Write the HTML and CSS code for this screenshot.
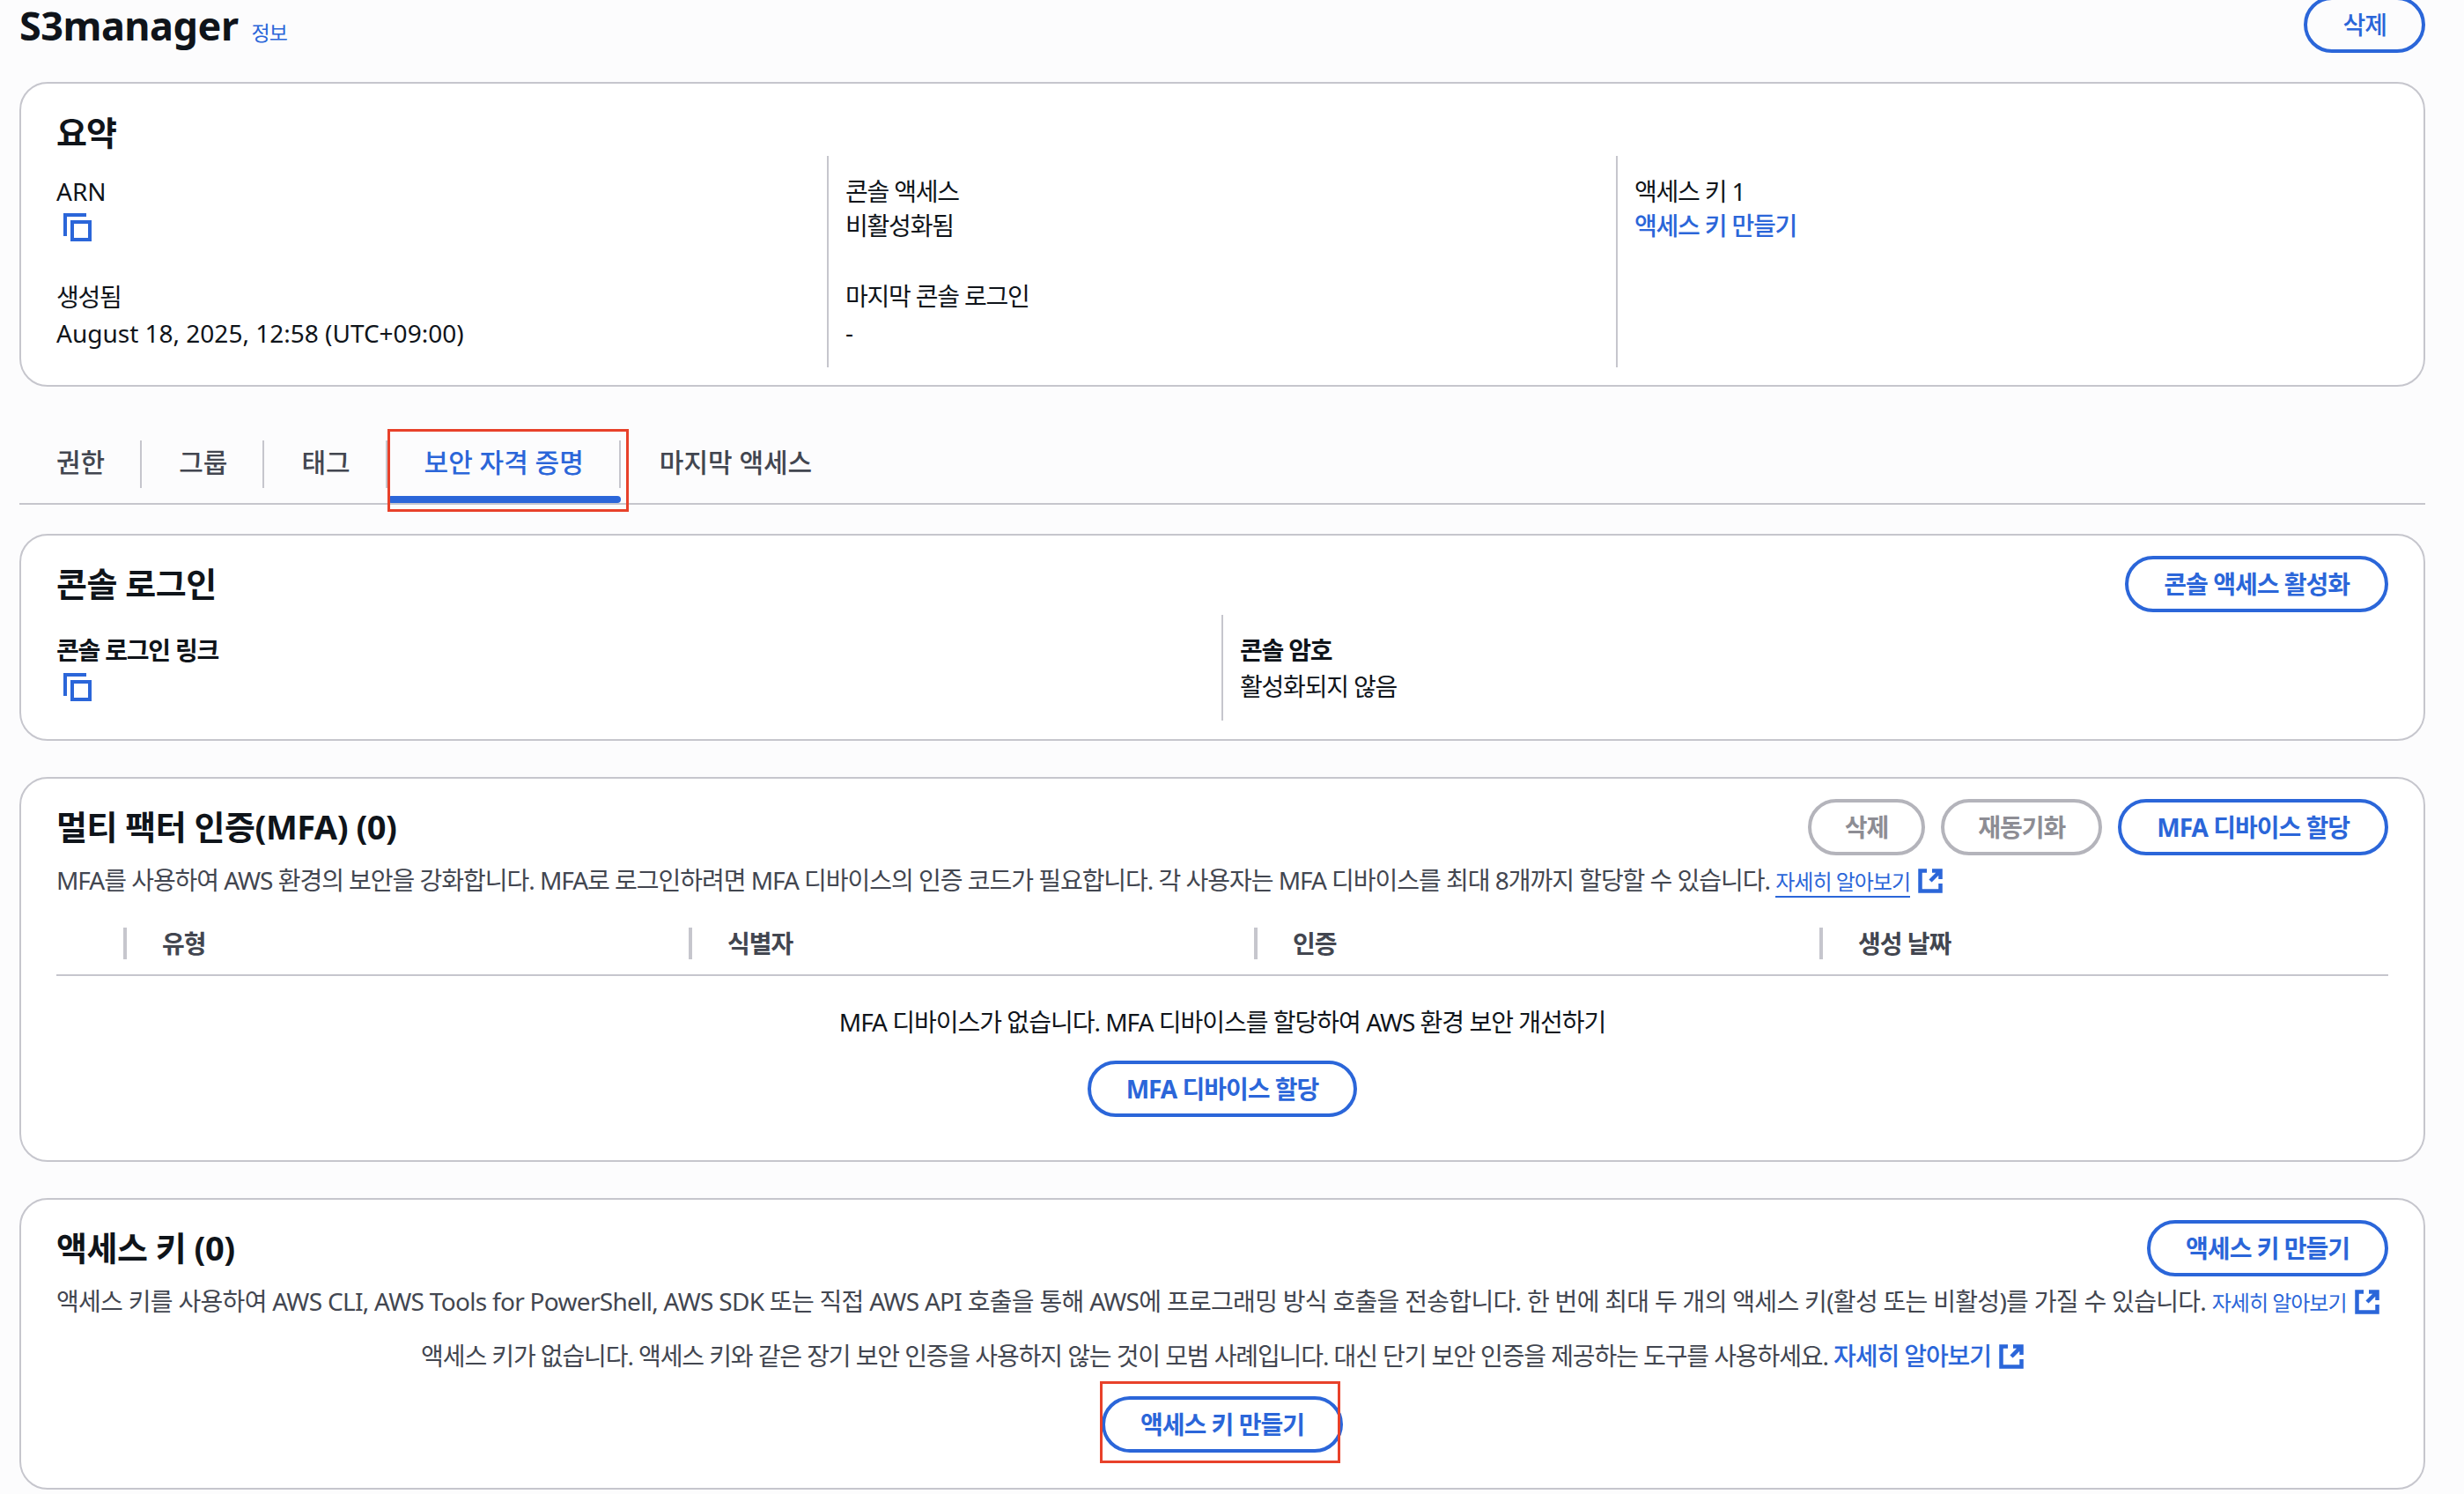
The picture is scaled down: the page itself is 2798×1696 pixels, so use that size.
FILE: index.html
```html
<!DOCTYPE html>
<html lang="ko">
<head>
<meta charset="utf-8">
<title>S3manager</title>
<link rel="stylesheet" href="styles.css">
</head>
<body>
<svg class="defs" width="0" height="0" aria-hidden="true">
  <symbol id="copy" viewBox="0 0 32 32"><path d="M26 2H2v24M10 10h20v20H10z" fill="none" stroke="currentColor" stroke-width="4"/></symbol>
  <symbol id="ext" viewBox="0 0 28 28"><path d="M10 2.500H2.500v23h23V17M16 2.500h9.500V12M25 3 14 14" fill="none" stroke="currentColor" stroke-width="4.500"/></symbol>
</svg>
<header class="page-head">
  <div class="title-wrap"><h1>S3manager</h1><a class="info">정보</a></div>
  <button class="btn">삭제</button>
</header>

<section class="card summary">
  <h2 class="h-sm">요약</h2>
  <div class="cols3">
    <div class="col">
      <div class="lbl latin">ARN</div>
      <svg class="copy"><use href="#copy"/></svg>
      <div class="lbl second">생성됨</div>
      <div class="val latin">August 18, 2025, 12:58 (UTC+09:00)</div>
    </div>
    <div class="col sep">
      <div class="lbl">콘솔 액세스</div>
      <div class="val">비활성화됨</div>
      <div class="lbl second alt">마지막 콘솔 로그인</div>
      <div class="val">-</div>
    </div>
    <div class="col sep">
      <div class="lbl">액세스 키 1</div>
      <a class="val link-b">액세스 키 만들기</a>
    </div>
  </div>
</section>

<nav class="tabs">
  <a class="tab">권한</a>
  <a class="tab">그룹</a>
  <a class="tab">태그</a>
  <a class="tab active">보안 자격 증명</a>
  <a class="tab last">마지막 액세스</a>
</nav>

<section class="card console">
  <div class="card-head">
    <h2>콘솔 로그인</h2>
    <button class="btn">콘솔 액세스 활성화</button>
  </div>
  <div class="cols2">
    <div class="col">
      <div class="lbl strong">콘솔 로그인 링크</div>
      <svg class="copy"><use href="#copy"/></svg>
    </div>
    <div class="col sep">
      <div class="lbl strong">콘솔 암호</div>
      <div class="val">활성화되지 않음</div>
    </div>
  </div>
</section>

<section class="card mfa">
  <div class="card-head">
    <h2>멀티 팩터 인증(MFA) (0)</h2>
    <div class="btns">
      <button class="btn off">삭제</button>
      <button class="btn off">재동기화</button>
      <button class="btn">MFA 디바이스 할당</button>
    </div>
  </div>
  <p class="desc">MFA를 사용하여 AWS 환경의 보안을 강화합니다. MFA로 로그인하려면 MFA 디바이스의 인증 코드가 필요합니다. 각 사용자는 MFA 디바이스를 최대 8개까지 할당할 수 있습니다. <a class="more under">자세히 알아보기</a><svg class="ext"><use href="#ext"/></svg></p>
  <div class="thead">
    <div class="th">유형</div>
    <div class="th">식별자</div>
    <div class="th">인증</div>
    <div class="th">생성 날짜</div>
  </div>
  <div class="empty">
    <p>MFA 디바이스가 없습니다. MFA 디바이스를 할당하여 AWS 환경 보안 개선하기</p>
    <button class="btn">MFA 디바이스 할당</button>
  </div>
</section>

<section class="card keys">
  <div class="card-head">
    <h2>액세스 키 (0)</h2>
    <button class="btn">액세스 키 만들기</button>
  </div>
  <p class="desc">액세스 키를 사용하여 AWS CLI, AWS Tools for PowerShell, AWS SDK 또는 직접 AWS API 호출을 통해 AWS에 프로그래밍 방식 호출을 전송합니다. 한 번에 최대 두 개의 액세스 키(활성 또는 비활성)를 가질 수 있습니다. <a class="more">자세히 알아보기</a><svg class="ext"><use href="#ext"/></svg></p>
  <div class="empty keys-empty">
    <p>액세스 키가 없습니다. 액세스 키와 같은 장기 보안 인증을 사용하지 않는 것이 모범 사례입니다. 대신 단기 보안 인증을 제공하는 도구를 사용하세요. <a class="link-b">자세히 알아보기</a><svg class="ext"><use href="#ext"/></svg></p>
    <button class="btn">액세스 키 만들기</button>
  </div>
</section>

<div class="mark tab-mark"></div>
<div class="mark btn-mark"></div>
</body>
</html>
```
FILE: styles.css
```css
* { box-sizing: border-box; }
html, body { margin: 0; height: 1696px; overflow: hidden; }
body {
  position: relative;
  padding: 0 44px 0 22px;
  background: #fcfcfd;
  color: #0f141a;
  font-family: "Noto Sans", "Noto Sans CJK KR", sans-serif;
  font-size: 28px;
  line-height: 40px;
  letter-spacing: -1px;
}
.defs { position: absolute; }
h1, h2, p { margin: 0; }
a { color: #2b66d9; }

.page-head { display: flex; justify-content: space-between; height: 93px; }
.title-wrap { display: flex; align-items: baseline; gap: 15px; height: 58px; }
h1 { font-size: 45px; font-weight: 700; line-height: 58px; letter-spacing: -.5px; }
.info { font-size: 23px; }

.btn {
  height: 64px;
  padding: 0 40px;
  border: 4px solid #2b66d9;
  border-radius: 32px;
  background: #fff;
  color: #2b66d9;
  font: 700 28px/1 "Noto Sans", "Noto Sans CJK KR", sans-serif;
  letter-spacing: -1px;
  white-space: nowrap;
}
.btn.off { padding: 0 38px; border-color: #b4b4bb; color: #8d8d94; }
.page-head .btn { margin-top: -4px; background: transparent; font-weight: 500; }

.card {
  width: 2732px;
  padding: 0 40px;
  border: 2px solid #c6c6cd;
  border-radius: 32px;
  background: #fff;
}
.summary { height: 346px; padding-top: 30px; }
.h-sm { font-size: 38px; font-weight: 700; line-height: 50px; }
.cols3 { display: grid; grid-template-columns: 875px 896px 1fr; height: 240px; margin-top: 2px; }
.cols3 .col > .lbl:first-child { padding-top: 19px; }
.cols3 .lbl:first-child + .val { margin-top: -2px; }
.cols2 { display: grid; grid-template-columns: 1323px 1fr; height: 120px; }
.col { letter-spacing: -1.2px; }
.sep { border-left: 2px solid #c6c6cd; padding-left: 19px; }
.lbl { line-height: 42px; padding-top: 4px; }
.val { line-height: 40px; display: block; }
.second { padding-top: 27px; }
.cols3 .alt { padding-top: 39px; }
.copy { display: block; width: 32px; height: 32px; margin: 4px 0 0 8px; color: #2b66d9; }
.link-b { color: #2b66d9; font-weight: 500; }
.summary .col:first-child .second { padding-top: 42px; }
.col .latin { letter-spacing: 0; }

.tabs { display: flex; width: 2732px; height: 134px; padding: 51px 0 0; margin-bottom: 33px; border-bottom: 2px solid #c6c6cd; align-items: stretch; }
.tab {
  position: relative;
  height: 81px;
  padding: 15px 42px 0;
  font-size: 30px;
  font-weight: 500;
  letter-spacing: 0;
  color: #424650;
}
.tab::after { content: ""; position: absolute; right: 0; top: 10px; height: 54px; border-right: 2px solid #c6c6cd; }
.tab.last::after { display: none; }
.tab.last { padding-left: 44px; }
.tab.active { color: #2b66d9; }
.tab.active::before { content: ""; position: absolute; left: 0; right: 0; bottom: 0; height: 8px; border-radius: 4px; background: #2b66d9; }

.card-head { display: flex; justify-content: space-between; align-items: center; padding-top: 23px; }
.card-head h2 { font-size: 38px; font-weight: 700; line-height: 62px; padding-bottom: 2px; letter-spacing: -.5px; }
.btns { display: flex; gap: 18px; }

.console { height: 235px; margin-bottom: 41px; }
.console .cols2 { margin-top: 3px; }
.strong { font-weight: 700; padding-top: 19px; }
.console .copy { margin-top: 5px; }

.mfa { height: 437px; margin-bottom: 41px; }
.desc { font-size: 28px; line-height: 40px; color: #424650; margin-top: 8px; white-space: nowrap; letter-spacing: -1.03px; }
.keys .desc { letter-spacing: -.7px; }
.more { font-size: 24px; letter-spacing: -1px; }
.under { border-bottom: 2px solid #2b66d9; }
.ext { width: 28px; height: 28px; margin-left: 9px; vertical-align: -4px; color: #2b66d9; }
.thead {
  display: grid;
  grid-template-columns: repeat(4, 642px);
  height: 55px;
  margin-top: 32px;
  padding-left: 76px;
  border-bottom: 2px solid #c6c6cd;
}
.th {
  height: 36px;
  padding-left: 40px;
  border-left: 4px solid #c6c6cd;
  font-weight: 600;
  line-height: 36px;
  color: #424650;
}
.empty { display: flex; flex-direction: column; align-items: center; }
.mfa .empty { padding-top: 32px; gap: 24px; }
.mfa .empty p { color: #0f141a; }
.keys { height: 331px; }
.keys .empty { padding-top: 20px; gap: 26px; }
.keys-empty p { color: #424650; white-space: nowrap; letter-spacing: -1.1px; }

.mark { position: absolute; border: 3px solid #e8412a; pointer-events: none; }
.tab-mark { left: 440px; top: 487px; width: 274px; height: 94px; }
.btn-mark { left: 1249px; top: 1568px; width: 273px; height: 93px; }
```
